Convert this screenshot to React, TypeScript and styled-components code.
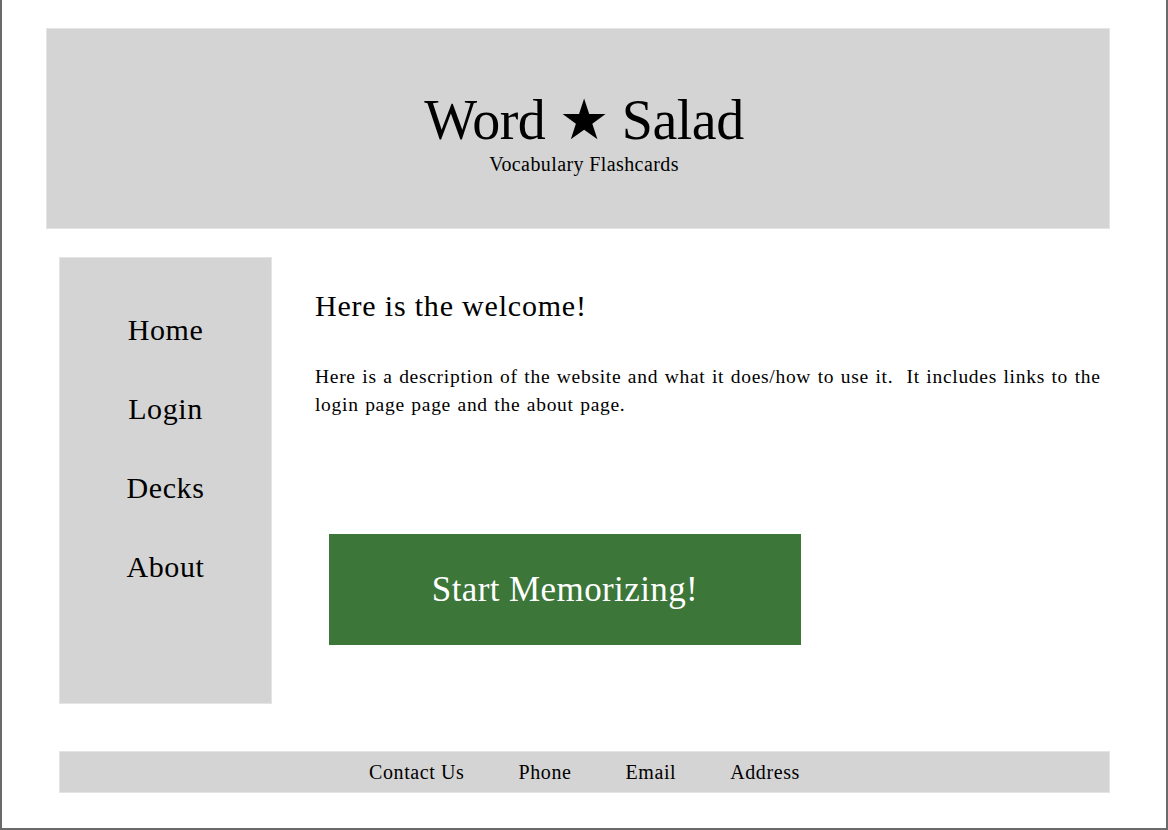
import React from "react";
import styled, { createGlobalStyle } from "styled-components";

const Global = createGlobalStyle`
  html, body { margin: 0; padding: 0; background: #ffffff; }
  body { font-family: "Liberation Serif", "DejaVu Serif", serif; color: #000; }
`;

const Page = styled.div`
  box-sizing: border-box;
  width: 1168px;
  height: 830px;
  border-left: 2px solid #6a6a6a;
  border-right: 2px solid #6a6a6a;
  border-bottom: 2px solid #6a6a6a;
  padding: 28px 56px 0 44px;
  display: flex;
  flex-direction: column;
`;

const Header = styled.header`
  box-sizing: border-box;
  height: 201px;
  background: #d4d4d4;
  border: 1px solid #e4e4e4;
  display: flex;
  flex-direction: column;
  align-items: center;
  justify-content: center;
  padding-top: 3px;
  padding-left: 12px;
`;

const Title = styled.h1`
  margin: 0;
  font-weight: normal;
  font-size: 56px;
  line-height: 66px;
  letter-spacing: -0.5px;
`;

const Subtitle = styled.div`
  font-size: 20px;
  line-height: 20px;
  letter-spacing: 0.4px;
  margin-top: 1px;
`;

const Main = styled.div`
  display: flex;
  margin-top: 28px;
  padding-left: 13px;
`;

const Sidebar = styled.nav`
  box-sizing: border-box;
  width: 213px;
  height: 447px;
  background: #d4d4d4;
  border: 1px solid #e4e4e4;
  display: flex;
  flex-direction: column;
  align-items: center;
  padding-top: 55px;
  gap: 45px;
`;

const NavItem = styled.a`
  font-size: 30px;
  line-height: 34px;
  letter-spacing: 0.6px;
  color: #000;
  text-decoration: none;
`;

const Content = styled.section`
  flex: 1;
  padding-left: 43px;
  padding-top: 32px;
`;

const Heading = styled.h2`
  margin: 0;
  font-weight: normal;
  font-size: 30px;
  line-height: 34px;
  letter-spacing: 0.8px;
`;

const Description = styled.p`
  margin: 40px 0 0 0;
  max-width: 795px;
  font-size: 19.5px;
  line-height: 28px;
  letter-spacing: 0.7px;
  word-spacing: 1px;
`;

const StartButton = styled.button`
  margin: 115px 0 0 14px;
  width: 472px;
  height: 111px;
  border: none;
  background: #3c7639;
  color: #ffffff;
  font-family: "Liberation Serif", "DejaVu Serif", serif;
  font-size: 35px;
  letter-spacing: 0.4px;
  display: block;
  cursor: pointer;
`;

const Footer = styled.footer`
  box-sizing: border-box;
  margin: 47px 0 0 13px;
  height: 42px;
  background: #d4d4d4;
  border: 1px solid #e4e4e4;
  display: flex;
  justify-content: center;
  align-items: center;
  gap: 54px;
`;

const FooterLink = styled.a`
  font-size: 20px;
  letter-spacing: 0.6px;
  color: #000;
  text-decoration: none;
`;

export default function App() {
  return (
    <>
      <Global />
      <Page>
        <Header>
          <Title>Word ★ Salad</Title>
          <Subtitle>Vocabulary Flashcards</Subtitle>
        </Header>
        <Main>
          <Sidebar>
            <NavItem>Home</NavItem>
            <NavItem>Login</NavItem>
            <NavItem>Decks</NavItem>
            <NavItem>About</NavItem>
          </Sidebar>
          <Content>
            <Heading>Here is the welcome!</Heading>
            <Description>
              Here is a description of the website and what it does/how to use it.&nbsp; It includes links to the login page page and the about page.
            </Description>
            <StartButton>Start Memorizing!</StartButton>
          </Content>
        </Main>
        <Footer>
          <FooterLink>Contact Us</FooterLink>
          <FooterLink>Phone</FooterLink>
          <FooterLink>Email</FooterLink>
          <FooterLink>Address</FooterLink>
        </Footer>
      </Page>
    </>
  );
}
